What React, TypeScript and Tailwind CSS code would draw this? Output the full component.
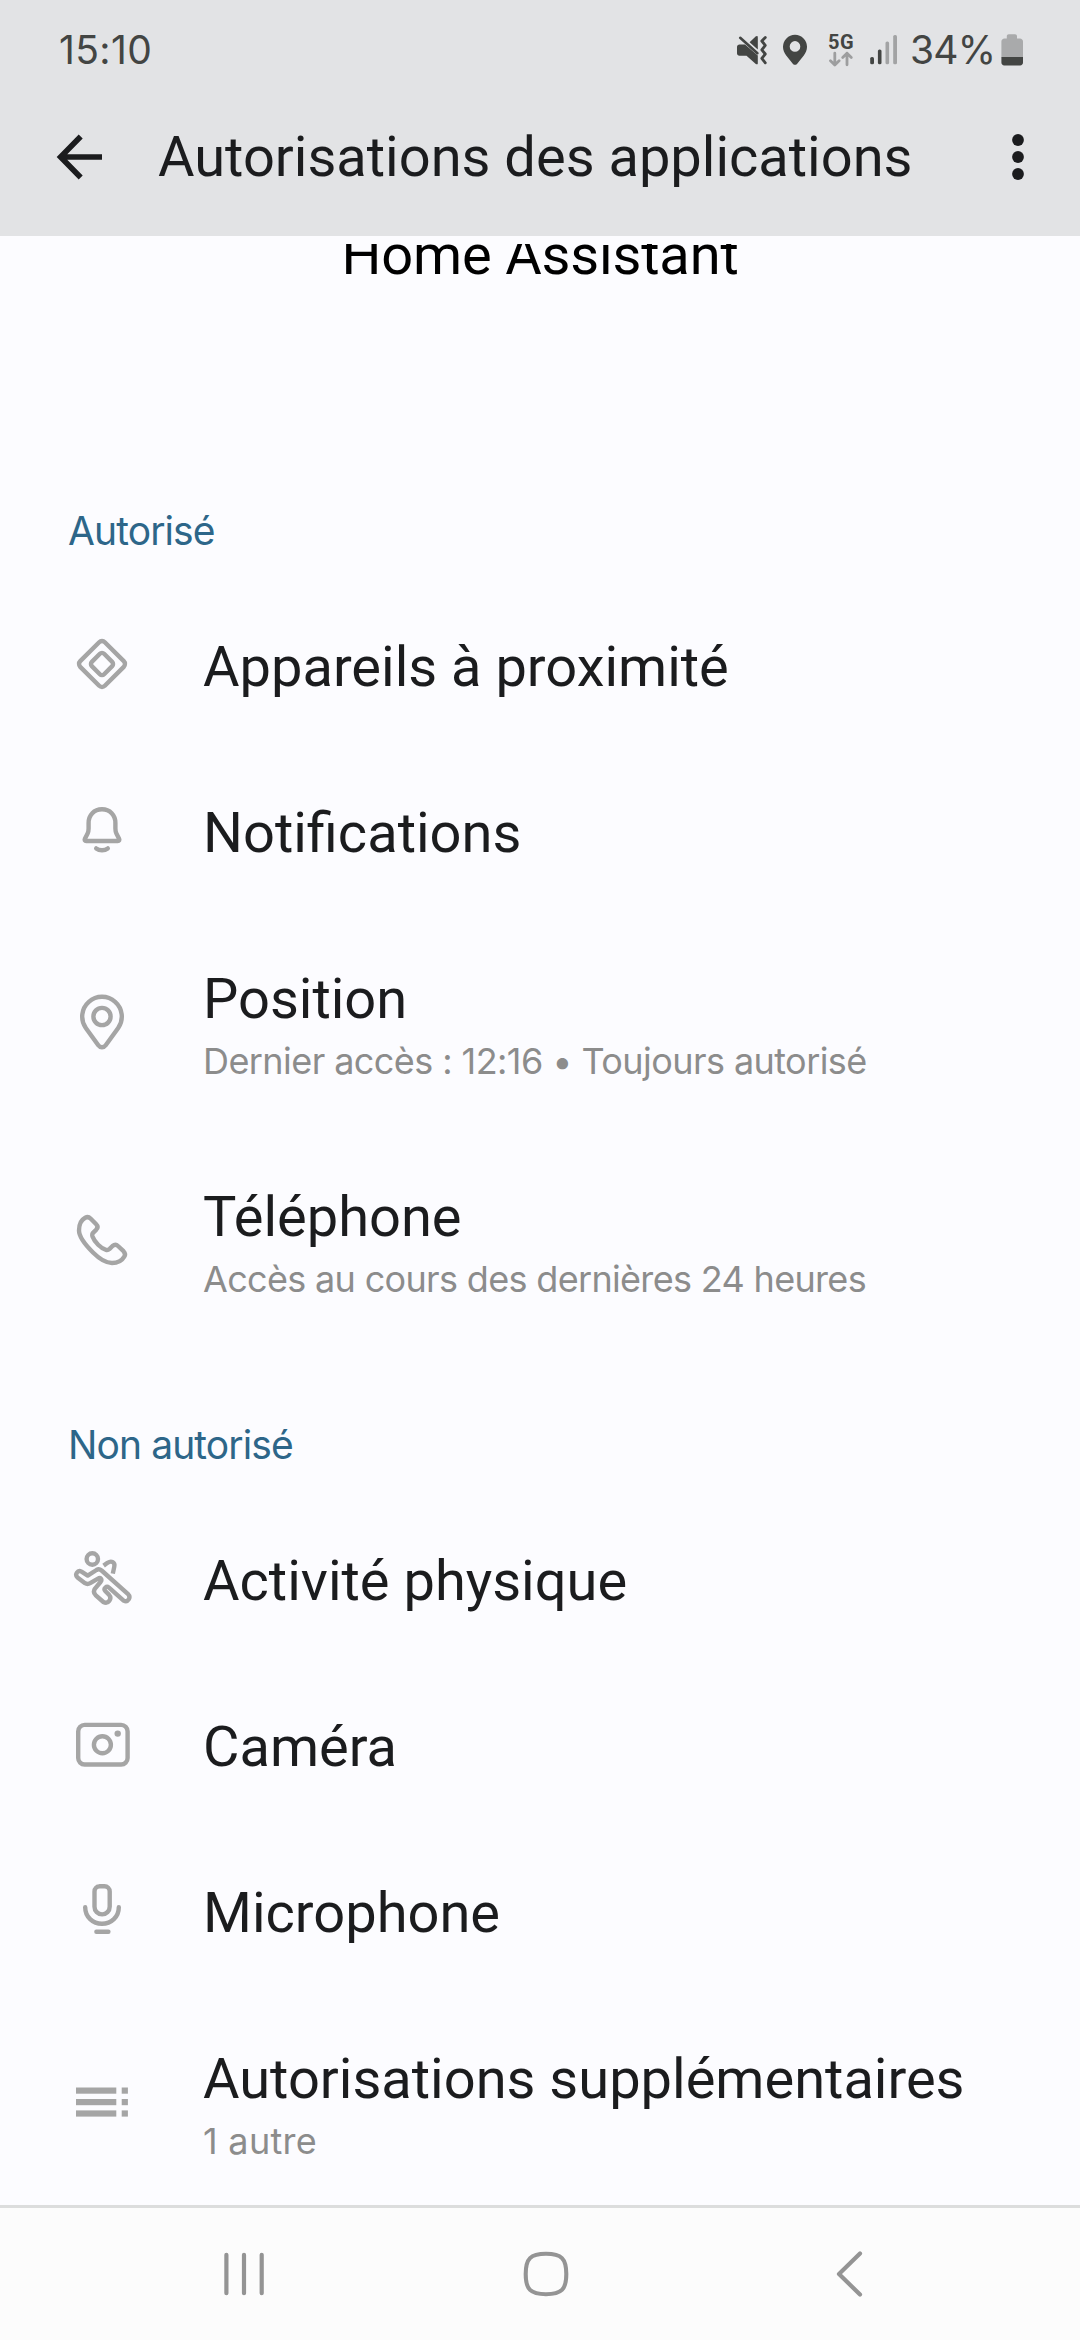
import React from "react";

type IconProps = { children: React.ReactNode };

function RowIcon({ children }: IconProps) {
  return (
    <svg
      className="mb-[6px] h-[60px] w-[60px] shrink-0 text-[#a5a5a5]"
      viewBox="0 0 60 60"
      fill="none"
      stroke="currentColor"
      strokeWidth="4.4"
      strokeLinecap="round"
      strokeLinejoin="round"
    >
      {children}
    </svg>
  );
}

const icons = {
  nearby: (
    <RowIcon>
      <rect x="12.6" y="12.6" width="34.8" height="34.8" rx="4" transform="rotate(45 30 30)" />
      <rect x="21.3" y="21.3" width="17.4" height="17.4" rx="3" transform="rotate(45 30 30)" />
    </RowIcon>
  ),
  bell: (
    <RowIcon>
      <path d="M30 9.3c-8 0-13.4 6-13.4 13.6v5.6c0 2-.3 3.600-1.100 5.200l-2.600 5c-.6 1.300 0 2.300 1.300 2.300h31.600c1.300 0 1.900-1 1.300-2.300l-2.600-5c-.8-1.600-1.100-3.200-1.100-5.200v-5.600c0-7.600-5.400-13.600-13.400-13.600z" />
      <path d="M24.200 48.400c3.300 2.500 8.300 2.500 11.600 0" />
    </RowIcon>
  ),
  pin: (
    <RowIcon>
      <path d="M13.800 36A19.800 19.800 0 1 1 46.200 36L33.700 53.300a4.500 4.500 0 0 1-7.400 0Z" />
      <circle cx="30" cy="24.500" r="8.600" />
    </RowIcon>
  ),
  phone: (
    <RowIcon>
      <path d="M7 20.500C7 14 10 9.500 13.200 7.800C15 6.800 17 7 18.500 8.500L24 14C25.800 15.800 25.800 18 24.300 19.600L21.300 22.600C20.200 23.800 20 25 20.500 26.500C22.500 32 29 38.500 34 39.800C35.500 40.200 36.500 39.800 37.600 38.800L40.500 36C42.300 34.500 44.500 34.500 46 36L51.500 41.200C53.200 43 53.300 45 52.300 46.600C50 50.500 45.500 53 40 53C34 53 27 48.500 21 42.500C13 34.500 7 27 7 20.500Z" />
    </RowIcon>
  ),
  activity: (
    <RowIcon>
      <circle cx="20.300" cy="11" r="5.700" />
      <path
        strokeLinecap="butt"
        d="M31.600 17.600L35.500 14.800C39.500 12.200 43.200 14.400 42.300 18.600L40.800 25.600"
      />
      <path d="M9.500 23.600L15.700 27.600L24.500 22C26.200 21 28 21.200 29.600 22.500L55.800 45.800C59.500 49.500 56 54.800 51.600 52.600L37 39.600C34.400 37.500 31.200 40.400 33.200 43L36.900 46.600C40.600 50.800 36 56.600 31.400 54L23.800 47.300C21.700 45.400 21.500 42.800 23 40.600L28.500 34C30.600 31.200 28.400 29.200 26 30.600L18.200 35.200C16.400 36.200 14.600 36.200 13 35.200L5.500 29.500C2.400 26.400 5.600 21.600 9.500 23.600Z" />
    </RowIcon>
  ),
  camera: (
    <RowIcon>
      <rect x="6.200" y="10.900" width="49.400" height="39.600" rx="6.500" />
      <circle cx="30.400" cy="30.700" r="8.500" />
      <circle cx="45.700" cy="19.600" r="3.200" fill="currentColor" stroke="none" />
    </RowIcon>
  ),
  mic: (
    <RowIcon>
      <path d="M27.600 6.200h4.900a5.200 5.200 0 0 1 5.200 5.200v15.400a7.600 7.600 0 0 1-15.200 0v-15.400a5.200 5.200 0 0 1 5.200-5.200z" />
      <path d="M13.200 27.200c0 9.600 7.500 16.600 16.800 16.600s16.800-7 16.800-16.600" />
      <path d="M24.400 51.700h12" />
    </RowIcon>
  ),
  list: (
    <RowIcon>
      <g fill="currentColor" stroke="none">
        <rect x="4" y="15.500" width="40.300" height="6.200" />
        <rect x="4" y="27" width="40.300" height="6.200" />
        <rect x="4" y="38.400" width="40.300" height="6.200" />
        <rect x="49.700" y="15.500" width="6.200" height="6.200" />
        <rect x="49.700" y="27" width="6.200" height="6.200" />
        <rect x="49.700" y="38.400" width="6.200" height="6.200" />
      </g>
    </RowIcon>
  ),
};

type Permission = { icon: keyof typeof icons; title: string; detail?: string; detailClass?: string };

const allowed: Permission[] = [
  { icon: "nearby", title: "Appareils à proximité" },
  { icon: "bell", title: "Notifications" },
  {
    icon: "pin",
    title: "Position",
    detail: "Dernier accès : 12:16 • Toujours autorisé",
    detailClass: "tracking-[-0.57px]",
  },
  {
    icon: "phone",
    title: "Téléphone",
    detail: "Accès au cours des dernières 24 heures",
    detailClass: "tracking-[-0.67px]",
  },
];

const denied: Permission[] = [
  { icon: "activity", title: "Activité physique" },
  { icon: "camera", title: "Caméra" },
  { icon: "mic", title: "Microphone" },
  { icon: "list", title: "Autorisations supplémentaires", detail: "1 autre", detailClass: "tracking-[0.3px]" },
];

function PermissionRow({ icon, title, detail, detailClass }: Permission) {
  return (
    <li className={`flex shrink-0 items-center pl-[72px] ${detail ? "h-[218px]" : "h-[166px]"}`}>
      {icons[icon]}
      <div className="ml-[71px] self-start whitespace-nowrap pt-[50px]">
        <div className="text-[56px] leading-[66px] text-[#1b1c1e]">{title}</div>
        {detail && (
          <div className={`mt-[7px] font-['Inter',sans-serif] text-[36px] leading-[44px] text-[#8c8c8c] ${detailClass}`}>
            {detail}
          </div>
        )}
      </div>
    </li>
  );
}

function Section({ title, rows }: { title: string; rows: Permission[] }) {
  return (
    <section className="shrink-0">
      <h2 className="h-[146px] pl-[68px] pt-[69px] font-['Inter',sans-serif] text-[39px] leading-[47px] tracking-[-0.9px] text-[#2d6689]">
        {title}
      </h2>
      <ul>
        {rows.map((row) => (
          <PermissionRow key={row.title} {...row} />
        ))}
      </ul>
    </section>
  );
}

function StatusBar() {
  return (
    <div className="flex h-[98px] items-start justify-between pl-[59px] pr-[57px] pt-[34px] text-[#434543]">
      <span className="-mt-[8px] font-['Inter',sans-serif] text-[39px] leading-[47px] tracking-[0.4px]">15:10</span>
      <div className="flex h-[32px] items-start">
        <svg className="h-[32px] w-[30px]" viewBox="0 0 30 32" fill="currentColor">
          <path d="M2.500 10.500h5.500l12.800 11v7.700c0 1.300-1 1.500-2 .7l-9.300-8.200h-7c-1.500 0-2.500-1-2.500-2.500v-6.200c0-1.500 1-2.500 2.500-2.500z" />
          <path d="M12.600 8.200l6-5.700c1.200-1 2.200-.6 2.200.9v12.100z" />
          <path d="M3.200 3.800l17.200 15.400" stroke="currentColor" strokeWidth="2.600" strokeLinecap="round" />
          <path
            d="M28.300 3.500l-3.500 3.500l3.500 4.300l-3.500 4.500l3.500 4.200l-3.500 4.300l3.500 4.500"
            fill="none"
            stroke="currentColor"
            strokeWidth="2.800"
            strokeLinecap="round"
            strokeLinejoin="round"
          />
        </svg>
        <svg className="ml-[16px] h-[32px] w-[24px]" viewBox="0 0 24 32" fill="currentColor">
          <path
            fillRule="evenodd"
            d="M12 .800a12 12 0 0 1 12 12.200c0 3.200-1.400 6-3.200 8.400l-6.800 8.500c-1.200 1.200-2.800 1.200-4 0l-6.800-8.500c-1.800-2.400-3.200-5.200-3.200-8.400a12 12 0 0 1 12-12.200zM12 7.100a5.300 5.300 0 1 0 0 10.600a5.300 5.300 0 1 0 0-10.600z"
          />
        </svg>
        <div className="ml-[21px] flex w-[27px] flex-col items-start">
          <span className="-mt-[2px] h-[19px] text-[20px] font-bold leading-[20px] tracking-[0.5px]">5G</span>
          <svg
            className="ml-px h-[16px] w-[25px] text-[#9d9e9f]"
            viewBox="0 0 25 16"
            fill="none"
            stroke="currentColor"
            strokeWidth="2.800"
            strokeLinecap="round"
            strokeLinejoin="round"
          >
            <path d="M5.800 2.200v11.800M1.500 9.800l4.300 4.300l4.300-4.300" />
            <path d="M18 13.800v-11.600M13.700 6.500l4.300-4.300l4.300 4.300" />
          </svg>
        </div>
        <svg className="ml-[14px] h-[32px] w-[29px]" viewBox="0 0 29 32" fill="currentColor">
          <rect x="1.200" y="23" width="3.800" height="7.300" rx="1.600" />
          <rect x="8.900" y="15.500" width="3.600" height="14.800" rx="1.600" />
          <g fill="#a2a3a4">
            <rect x="16.500" y="7.500" width="3.600" height="22.800" rx="1.600" />
            <rect x="24.200" y="1" width="3.800" height="29.300" rx="1.600" />
          </g>
        </svg>
        <span className="-mt-[8px] ml-[12px] w-[91px] whitespace-nowrap font-['Inter',sans-serif] text-[39px] leading-[47px] tracking-[-0.8px]">
          34%
        </span>
        <svg className="h-[32px] w-[22px]" viewBox="0 0 22 32">
          <path
            fill="#a9aaab"
            d="M7.800.300h6.200c1.200 0 2 .8 2 2v2.200h3c1.600 0 3 1.400 3 3v15.800h-21.600v-15.800c0-1.600 1.400-3 3-3h2.400v-2.200c0-1.200.8-2 2-2z"
          />
          <path fill="#434543" d="M.4 23h21.600v5.600c0 1.600-1.200 2.900-2.800 2.900h-16c-1.600 0-2.800-1.300-2.800-2.900z" />
        </svg>
      </div>
    </div>
  );
}

function AppBar() {
  return (
    <div className="flex h-[118px] items-center pl-[54px] text-[#1b1c1e]">
      <svg
        className="h-[50px] w-[50px] shrink-0"
        viewBox="0 0 50 50"
        fill="none"
        stroke="currentColor"
        strokeWidth="5.600"
      >
        <path d="M26.700 4.500L6.600 25L26.700 45.500M7 25H48" />
      </svg>
      <h1 className="ml-[54px] whitespace-nowrap text-[56px] leading-[66px]">Autorisations des applications</h1>
      <svg className="ml-auto mr-[52px] h-[50px] w-[20px]" viewBox="0 0 20 50" fill="currentColor">
        <circle cx="10" cy="8" r="5.900" />
        <circle cx="10" cy="25" r="5.900" />
        <circle cx="10" cy="42" r="5.900" />
      </svg>
    </div>
  );
}

function NavigationBar() {
  return (
    <nav className="flex h-[135px] shrink-0 items-center gap-[242px] border-t-[3px] border-[#dcdddd] bg-[#fcfcfc] pl-[214px] text-[#949494]">
      <svg className="h-[60px] w-[60px]" viewBox="0 0 60 60" stroke="currentColor" strokeWidth="4.200" strokeLinecap="round">
        <path d="M12.400 10.800v38.400M30 10.800v38.400M47.700 10.800v38.400" />
      </svg>
      <svg className="h-[60px] w-[60px]" viewBox="0 0 60 60" fill="none" stroke="currentColor" strokeWidth="4.100">
        <path d="M30 9.800C45.500 9.800 50.300 14.500 50.300 30S45.500 50.200 30 50.200S9.700 45.500 9.700 30S14.500 9.800 30 9.800Z" />
      </svg>
      <svg
        className="h-[60px] w-[60px]"
        viewBox="0 0 60 60"
        fill="none"
        stroke="currentColor"
        strokeWidth="4.200"
        strokeLinecap="round"
        strokeLinejoin="round"
      >
        <path d="M42 9.500L21 30L42 50.500" />
      </svg>
    </nav>
  );
}

export default function App() {
  return (
    <div className="flex h-[2340px] w-[1080px] flex-col overflow-hidden bg-[#fcfcff] font-['Roboto',sans-serif]">
      <header className="h-[236px] shrink-0 bg-[#e2e3e5]">
        <StatusBar />
        <AppBar />
      </header>
      <main className="mt-[8px] flex min-h-0 flex-1 flex-col overflow-hidden">
        <div className="flex h-[194px] shrink-0 justify-center overflow-hidden">
          <div className="-mt-[22px] text-[56px] leading-[66px] tracking-[-0.16px] text-black">Home Assistant</div>
        </div>
        <Section title="Autorisé" rows={allowed} />
        <Section title="Non autorisé" rows={denied} />
      </main>
      <NavigationBar />
    </div>
  );
}
